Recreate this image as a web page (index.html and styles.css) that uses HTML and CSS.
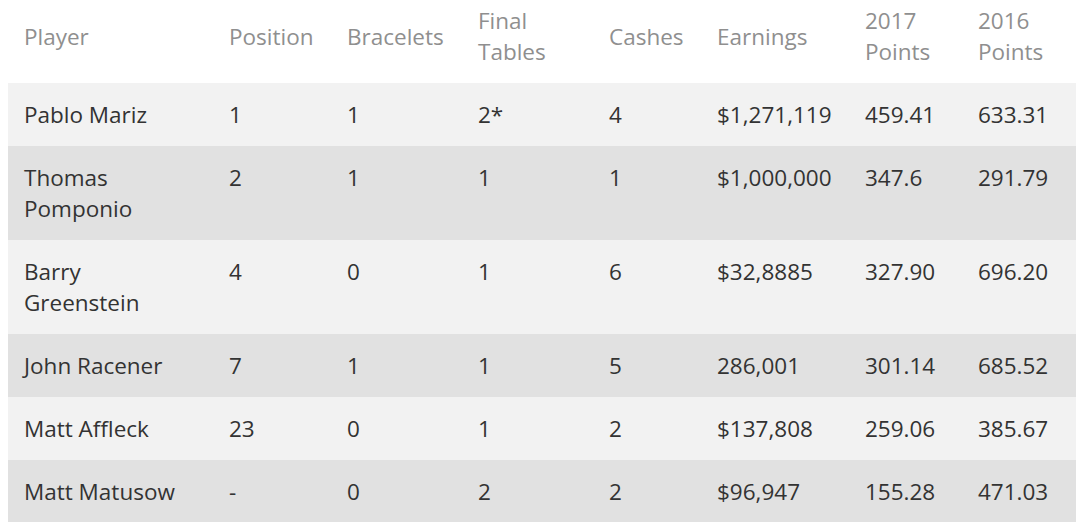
FILE: index.html
```html
<!DOCTYPE html>
<html>
<head>
<meta charset="utf-8">
<link rel="stylesheet" href="styles.css">
</head>
<body>
<table class="stats">
  <colgroup>
    <col class="c-player">
    <col class="c-pos">
    <col class="c-brac">
    <col class="c-final">
    <col class="c-cash">
    <col class="c-earn">
    <col class="c-p17">
    <col class="c-p16">
  </colgroup>
  <thead>
    <tr>
      <th>Player</th>
      <th>Position</th>
      <th>Bracelets</th>
      <th>Final Tables</th>
      <th>Cashes</th>
      <th>Earnings</th>
      <th>2017 Points</th>
      <th>2016 Points</th>
    </tr>
  </thead>
  <tbody>
    <tr class="odd">
      <td>Pablo Mariz</td><td>1</td><td>1</td><td>2*</td><td>4</td><td>$1,271,119</td><td>459.41</td><td>633.31</td>
    </tr>
    <tr class="even">
      <td>Thomas Pomponio</td><td>2</td><td>1</td><td>1</td><td>1</td><td>$1,000,000</td><td>347.6</td><td>291.79</td>
    </tr>
    <tr class="odd">
      <td>Barry Greenstein</td><td>4</td><td>0</td><td>1</td><td>6</td><td>$32,8885</td><td>327.90</td><td>696.20</td>
    </tr>
    <tr class="even">
      <td>John Racener</td><td>7</td><td>1</td><td>1</td><td>5</td><td>286,001</td><td>301.14</td><td>685.52</td>
    </tr>
    <tr class="odd">
      <td>Matt Affleck</td><td>23</td><td>0</td><td>1</td><td>2</td><td>$137,808</td><td>259.06</td><td>385.67</td>
    </tr>
    <tr class="even">
      <td>Matt Matusow</td><td>-</td><td>0</td><td>2</td><td>2</td><td>$96,947</td><td>155.28</td><td>471.03</td>
    </tr>
  </tbody>
</table>
</body>
</html>
```

FILE: styles.css
```css
html, body {
  margin: 0;
  padding: 0;
  background: #ffffff;
}
body {
  padding-left: 8px;
  font-family: "Open Sans", "DejaVu Sans", sans-serif;
  font-size: 22.5px;
  line-height: 31px;
  color: #333333;
  overflow: hidden;
}
.stats {
  border-collapse: collapse;
  border-spacing: 0;
  table-layout: fixed;
  width: 1068px;
}
.c-player { width: 205px; }
.c-pos { width: 118px; }
.c-brac { width: 131px; }
.c-final { width: 131px; }
.c-cash { width: 108px; }
.c-earn { width: 148px; }
.c-p17 { width: 113px; }
.c-p16 { width: 114px; }
.stats th {
  text-align: left;
  font-weight: 400;
  color: #8f8f8f;
  padding: 5px 16px 16px 16px;
  vertical-align: middle;
}
.stats td {
  text-align: left;
  vertical-align: top;
  padding: 16px 16px 16px 16px;
}
.stats tr.odd { background: #f2f2f2; }
.stats tr.even { background: #e1e1e1; }
```
